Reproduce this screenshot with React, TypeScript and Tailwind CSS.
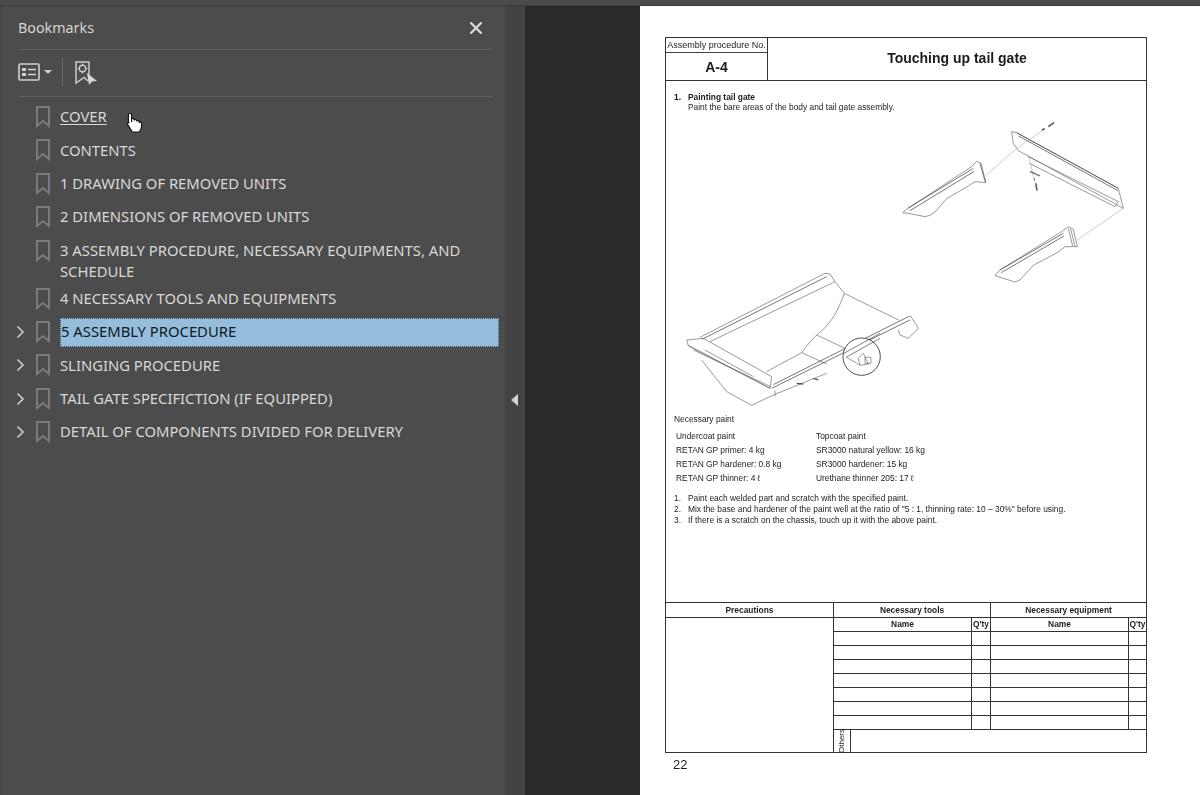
import React from "react";

const rows: { t: string; arrow?: boolean; sel?: boolean; u?: boolean; tall?: boolean }[] = [
  { t: "COVER", u: true },
  { t: "CONTENTS" },
  { t: "1 DRAWING OF REMOVED UNITS" },
  { t: "2 DIMENSIONS OF REMOVED UNITS" },
  { t: "3 ASSEMBLY PROCEDURE, NECESSARY EQUIPMENTS, AND SCHEDULE", tall: true },
  { t: "4 NECESSARY TOOLS AND EQUIPMENTS" },
  { t: "5 ASSEMBLY PROCEDURE", arrow: true, sel: true },
  { t: "SLINGING PROCEDURE", arrow: true },
  { t: "TAIL GATE SPECIFICTION (IF EQUIPPED)", arrow: true },
  { t: "DETAIL OF COMPONENTS DIVIDED FOR DELIVERY", arrow: true },
];

function BookmarkIcon() {
  return (
    <svg width="14" height="22" viewBox="0 0 14 22" fill="none" className="shrink-0">
      <path d="M1 1h12v19l-6-5-6 5z" stroke="#7b7b7b" strokeWidth="2" strokeLinejoin="miter" />
    </svg>
  );
}

function Row({ r }: { r: (typeof rows)[number] }) {
  return (
    <div className={`flex pl-[14px] pr-[6px] ${r.tall ? "h-[48.4px] items-start pt-[6px]" : "h-[33.3px] items-center"}`}>
      <div className="w-[20px] shrink-0">
        {r.arrow && (
          <svg width="9" height="14" viewBox="0 0 9 14" fill="none">
            <path d="M1.5 1.5 7 7l-5.5 5.5" stroke="#c9c9c9" strokeWidth="1.7" />
          </svg>
        )}
      </div>
      <BookmarkIcon />
      <div
        className={`ml-[10px] flex-1 text-[14.8px] leading-[21.5px] ${
          r.sel
            ? "flex h-[29px] items-center border border-dotted border-[#3a4a55] bg-[#94bedb] text-[#10181e]"
            : "text-[#d8d8d8]"
        } ${r.u ? "underline underline-offset-2" : ""}`}
      >
        {r.t}
      </div>
    </div>
  );
}

function Sidebar() {
  return (
    <aside className="relative flex w-[505px] shrink-0 flex-col border-l border-[#434343] bg-[#4c4c4c] pl-[1px] font-['Noto_Sans',sans-serif]">
      <div className="mx-[16px] mr-[12px] flex h-[44px] items-center justify-between border-b border-[#5f5f5f]">
        <span className="text-[14.3px] text-[#d4d4d4]">Bookmarks</span>
        <svg width="14" height="14" viewBox="0 0 14 14" className="mr-[10px]">
          <path d="M1.5 1.5l11 11M12.5 1.5l-11 11" stroke="#d6d6d6" strokeWidth="2.4" />
        </svg>
      </div>
      <div className="mx-[16px] mr-[12px] flex h-[47px] items-center border-b border-[#5f5f5f] pb-[2px]">
        <svg width="22" height="18" viewBox="0 0 22 18" fill="none">
          <rect x="1" y="1" width="20" height="16" rx="1" stroke="#cfcfcf" strokeWidth="1.6" />
          <rect x="4" y="5" width="4" height="3" fill="#cfcfcf" />
          <rect x="4" y="10" width="4" height="3" fill="#cfcfcf" />
          <path d="M10 6.5h8M10 11.5h8" stroke="#cfcfcf" strokeWidth="1.6" />
        </svg>
        <svg width="8" height="4" viewBox="0 0 8 4" className="ml-[4px]">
          <path d="M0 0h8L4 4z" fill="#cfcfcf" />
        </svg>
        <div className="ml-[10px] h-[30px] w-px bg-[#666666]" />
        <svg width="24" height="25" viewBox="0 0 24 25" fill="none" className="ml-[10px]">
          <path d="M15 21l-4-3.5L3 23V2h13v13" stroke="#c9c9c9" strokeWidth="1.5" />
          <circle cx="9.5" cy="8.5" r="3.2" stroke="#c9c9c9" strokeWidth="1.4" />
          <path d="M9.5 3.5v1.6M9.5 12v1.6M4.5 8.5h1.6M13 8.5h1.6" stroke="#c9c9c9" strokeWidth="1.2" />
          <path d="M14 13l10 8-5 .5-3 3.5z" fill="#d8d8d8" />
        </svg>
      </div>
      <div className="pt-[3.5px]">
        {rows.map((r) => (
          <Row key={r.t} r={r} />
        ))}
      </div>
      <svg width="18" height="21" viewBox="0 0 18 21" className="absolute left-[125px] top-[106px]">
        <path
          d="M4 1.5c1 0 1.6.7 1.6 1.6V10V7.6c0-1.6 2.6-1.6 2.6 0v1c0-1.4 2.6-1.4 2.6 0v1c0-1.3 2.5-1.3 2.5.2v1.2c0-1.2 2.2-1.2 2.2.2v3c0 2.6-1.6 4.8-2.3 5.8H6.4L1.7 12.6c-.9-1.3.7-2.6 1.7-1.6l-.9-.4-.1-.6V3.1c0-.9.7-1.6 1.6-1.6z"
          fill="#fff"
          stroke="#111"
          strokeWidth="1.1"
        />
      </svg>
    </aside>
  );
}

function Drawings() {
  const thin = { fill: "none", stroke: "#666", strokeWidth: 2 } as const;
  const dark = { fill: "none", stroke: "#444", strokeWidth: 2.2 } as const;
  const faint = { fill: "none", stroke: "#a0a0a0", strokeWidth: 1.6 } as const;
  return (
    <svg viewBox="666 115 480 297" width="480" height="297" className="block">
      <g transform="translate(880 100) scale(.3333)">
        <path d="M395 95 410 98 715 265 730 325 415 152 400 130z" {...thin} />
        <path d="M410 98 715 265M416 108 714 272" {...dark} />
        <path d="M445 170 715 305 705 320 448 190" {...thin} />
        <path d="M410 145 490 90M318 226 410 145M592 420 730 325M445 165 455 205 470 270" {...faint} />
        <path d="M486 90 494 86M505 80 522 68" fill="none" stroke="#555" strokeWidth="5" />
        <path d="M450 214 480 228M462 236 464 240" fill="none" stroke="#666" strokeWidth="4" />
        <path d="M468 250 471 272" fill="none" stroke="#666" strokeWidth="5" />
        <path d="M68 338 85 324 275 200 290 184 303 190 318 248 285 245 265 258 200 296 165 336 150 346 135 350 85 340z" {...thin} />
        <path d="M85 324 280 205M90 332 283 214" {...dark} />
        <path d="M300 190 316 246" {...dark} />
        <path d="M345 526 360 510 545 395 565 380 580 388 592 440 555 440 535 456 460 496 420 540 405 546 360 532z" {...thin} />
        <path d="M360 510 550 400M364 518 552 408" {...dark} />
        <path d="M565 385 578 438M572 386 585 440" {...thin} />
      </g>
      <g transform="translate(660 260) scale(.3333)">
        <path d="M120 232 495 40 510 42 525 65 553 100 715 180" {...thin} />
        <path d="M126 238 500 50" {...dark} />
        <path d="M150 245 525 65M553 100C525 180 495 205 470 225 445 250 435 265 425 278M470 225 555 265M425 278 500 312M425 278 320 335" {...thin} />
        <path d="M335 385 750 180M340 374 745 170" {...dark} />
        <path d="M80 240 130 235 335 350 330 385 85 258z" {...thin} />
        <path d="M85 256 330 385M100 270 332 380M135 270 280 350" {...thin} />
        <path d="M745 170 752 168 775 205 745 235 720 225 715 210" {...thin} />
        <path d="M125 300 200 395 275 436 340 405M340 405 500 340M345 392 345 410" {...thin} />
        <path d="M410 370 430 372M460 355 475 360" fill="none" stroke="#555" strokeWidth="4" />
        <circle cx="605" cy="290" r="56" fill="#fff" stroke="#333" strokeWidth="2.6" />
        <path d="M552 280 660 220M558 292 660 235" {...dark} strokeWidth={2} />
        <path d="M560 292 600 316 625 312 610 280 595 295 600 316" {...thin} />
        <path d="M615 292h18v18h-18z" {...dark} strokeWidth={1.6} />
      </g>
    </svg>
  );
}

function Cell({ cls = "", children }: { cls?: string; children?: React.ReactNode }) {
  return (
    <div className={`flex items-center justify-center border-t border-[#333] text-[8.4px] font-bold ${cls}`}>
      {children}
    </div>
  );
}

function BottomTable() {
  return (
    <div className="grid h-[150px] grid-cols-[168px_137px_20px_137px_18px] grid-rows-[15px_14px_repeat(7,14px)_1fr]">
      <Cell cls="border-r">Precautions</Cell>
      <Cell cls="col-span-2 border-r">Necessary tools</Cell>
      <Cell cls="col-span-2">Necessary equipment</Cell>
      <Cell cls="row-span-9 border-r" />
      <Cell>Name</Cell>
      <Cell cls="border-l border-r">Q'ty</Cell>
      <Cell>Name</Cell>
      <Cell cls="border-l">Q'ty</Cell>
      {Array.from({ length: 7 }).flatMap((_, i) => [
        <Cell key={`a${i}`} />,
        <Cell key={`b${i}`} cls="border-l border-r" />,
        <Cell key={`c${i}`} />,
        <Cell key={`d${i}`} cls="border-l" />,
      ])}
      <div className="col-span-4 flex border-t border-[#333]">
        <div className="flex w-[17px] items-center justify-center border-r border-[#333]">
          <span className="-rotate-90 text-[8px] leading-none">Others</span>
        </div>
      </div>
    </div>
  );
}

function DocPage() {
  const paints = [
    ["Undercoat paint", "Topcoat paint"],
    ["RETAN GP primer: 4 kg", "SR3000 natural yellow: 16 kg"],
    ["RETAN GP hardener: 0.8 kg", "SR3000 hardener: 15 kg"],
    ["RETAN GP thinner: 4 ℓ", "Urethane thinner 205: 17 ℓ"],
  ];
  return (
    <main className="h-[789px] w-[560px] shrink-0 bg-white pl-[25px] pt-[31px] font-['Liberation_Sans',Arial,sans-serif] text-[#1c1c1c] blur-[0.3px]">
      <div className="flex h-[716px] w-[482px] flex-col border border-[#333]">
        <div className="flex h-[42px] shrink-0">
          <div className="flex w-[102px] flex-col border-r border-[#333]">
            <div className="flex h-[15px] items-center justify-center whitespace-nowrap border-b border-[#444] pt-[2px] text-[9px]">
              Assembly procedure No.
            </div>
            <div className="flex flex-1 items-center justify-center pt-[2px] text-[14px] font-bold">A-4</div>
          </div>
          <div className="flex flex-1 items-center justify-center pb-[1px] text-[14px] font-bold">
            Touching up tail gate
          </div>
        </div>
        <div className="flex flex-1 flex-col border-t border-[#333]">
          <div className="pl-[8px] pt-[11px] text-[8.4px] leading-[10px]">
            <div className="flex font-bold">
              <span className="w-[14px]">1.</span>Painting tail gate
            </div>
            <div className="pl-[14px]">Paint the bare areas of the body and tail gate assembly.</div>
          </div>
          <div className="mt-[3px]">
            <Drawings />
          </div>
          <div className="pl-[8px] text-[8.4px] leading-[10px]">
            <div className="mt-[2px]">Necessary paint</div>
            <div className="mt-[7px] flex flex-col gap-[4px] pl-[2px]">
              {paints.map(([a, b]) => (
                <div key={a} className="flex leading-[10px]">
                  <span className="w-[140px]">{a}</span>
                  <span>{b}</span>
                </div>
              ))}
            </div>
            <div className="mt-[10px] flex flex-col leading-[11px]">
              <div className="flex"><span className="w-[14px]">1.</span>Paint each welded part and scratch with the specified paint.</div>
              <div className="flex"><span className="w-[14px]">2.</span>Mix the base and hardener of the paint well at the ratio of "5 : 1, thinning rate: 10 – 30%" before using.</div>
              <div className="flex"><span className="w-[14px]">3.</span>If there is a scratch on the chassis, touch up it with the above paint.</div>
            </div>
          </div>
          <div className="flex-1" />
          <BottomTable />
        </div>
      </div>
      <div className="pl-[8px] pt-[4px] text-[13px] leading-[15px]">22</div>
    </main>
  );
}

export default function App() {
  return (
    <div className="flex h-[795px] w-[1200px] flex-col overflow-hidden bg-[#2a2a2a]">
      <div className="h-[6px] shrink-0 border-b border-[#3c3c3c] bg-[#4b4b4b]" />
      <div className="flex min-h-0 flex-1">
        <Sidebar />
        <div className="flex w-[20px] shrink-0 items-center justify-center bg-[#434343] pb-[2px]">
          <div className="mr-[2px] h-0 w-0 border-y-[6px] border-r-[7px] border-y-transparent border-r-[#d4d4d4]" />
        </div>
        <div className="w-[115px] shrink-0 bg-[#2a2a2a]" />
        <DocPage />
      </div>
    </div>
  );
}
